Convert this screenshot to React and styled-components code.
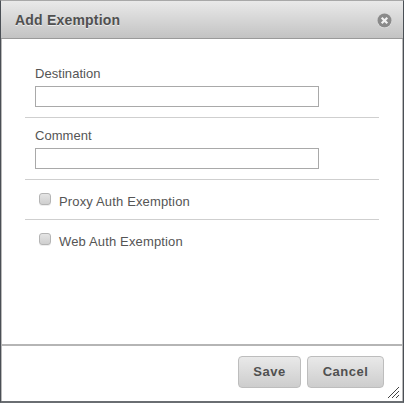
import React from "react";
import styled, { createGlobalStyle } from "styled-components";

const Global = createGlobalStyle`
  html, body { margin: 0; padding: 0; background: #fff; }
  * { box-sizing: border-box; }
`;

const Dialog = styled.div`
  position: relative;
  width: 404px;
  height: 403px;
  display: flex;
  flex-direction: column;
  background: #fff;
  border-left: 1px solid #4a4f55;
  border-right: 1px solid #4a4f55;
  border-bottom: 2px solid #6a6e72;
  border-top: 1px solid #a8a8a8;
  box-shadow: inset 1px 0 0 #b9b9b9, inset -1px 0 0 #b9b9b9;
  font-family: "Liberation Sans", Arial, sans-serif;
`;

const Header = styled.div`
  height: 38px;
  flex: none;
  display: flex;
  align-items: center;
  justify-content: space-between;
  padding: 0 11px 0 14px;
  background: linear-gradient(#e9e9e9, #c3c3c3);
  border-bottom: 1px solid #9a9a9a;
`;

const Title = styled.h1`
  margin: 0;
  font-size: 14px;
  font-weight: bold;
  letter-spacing: 0.2px;
  color: #505050;
  text-shadow: 0 1px 0 #eee;
`;

const Close = styled.svg`
  width: 15px;
  height: 15px;
  margin-top: 1px;
  display: block;
`;

const Body = styled.div`
  flex: 1;
  padding: 24px 24px 0;
`;

const Section = styled.div`
  padding: ${(p) => p.$pad};
  border-bottom: ${(p) => (p.$last ? "none" : "1px solid #cfcfcf")};
`;

const Label = styled.label`
  display: block;
  font-size: 13px;
  line-height: 16px;
  letter-spacing: 0.05px;
  color: #555;
  margin-bottom: 4px;
`;

const Input = styled.input`
  display: block;
  width: 284px;
  height: 21px;
  padding: 0 4px;
  border: 1px solid #a9a9a9;
  background: #fff;
  outline: none;
`;

const CheckRow = styled.label`
  display: flex;
  align-items: center;
  gap: 8px;
  font-size: 13px;
  line-height: 16px;
  letter-spacing: 0.15px;
  color: #555;
`;

const Box = styled.span`
  width: 12px;
  height: 12px;
  flex: none;
  border: 1px solid #b4b4b4;
  border-radius: 3px;
  background: linear-gradient(#e4e4e4, #cfcfcf);
  box-shadow: 0 1px 0 #eee;
  position: relative;
  top: -3px;
`;

const Footer = styled.div`
  height: 57px;
  flex: none;
  display: flex;
  justify-content: flex-end;
  align-items: flex-start;
  gap: 6px;
  padding: 10px 19px 0 0;
  border-top: 2px solid #b5b5b5;
`;

const Button = styled.button`
  width: ${(p) => p.$w}px;
  height: 32px;
  padding: 0 0 2px;
  border: 1px solid #bdbdbd;
  border-radius: 4px;
  background: linear-gradient(#e9e9e9, #cdcdcd);
  font-family: inherit;
  font-size: 13px;
  font-weight: bold;
  letter-spacing: 0.5px;
  color: #505050;
`;

const Grip = styled.svg`
  position: absolute;
  right: 4px;
  bottom: 3px;
  width: 11px;
  height: 11px;
`;

export default function App() {
  return (
    <>
      <Global />
      <Dialog>
        <Header>
          <Title>Add Exemption</Title>
          <Close viewBox="0 0 15 15">
            <circle cx="7.5" cy="8" r="7" fill="#f0f0f0" />
            <circle cx="7.5" cy="7.5" r="7" fill="#8a8a8a" />
            <path d="M4.7 4.7l5.6 5.6M10.3 4.7l-5.6 5.6" stroke="#f2f2f2" strokeWidth="2.2" />
          </Close>
        </Header>
        <Body>
          <Section $pad="3px 0 10px 10px">
            <Label>Destination</Label>
            <Input />
          </Section>
          <Section $pad="10px 0 10px 10px">
            <Label>Comment</Label>
            <Input />
          </Section>
          <Section $pad="14px 0 9px 14px">
            <CheckRow><Box />Proxy Auth Exemption</CheckRow>
          </Section>
          <Section $last $pad="14px 0 0 14px">
            <CheckRow><Box />Web Auth Exemption</CheckRow>
          </Section>
        </Body>
        <Footer>
          <Button $w={63}>Save</Button>
          <Button $w={77}>Cancel</Button>
        </Footer>
        <Grip viewBox="0 0 11 11">
          <path d="M0 11L11 0M4 11l7-7M8 11l3-3" stroke="#444" strokeWidth="1" fill="none" />
        </Grip>
      </Dialog>
    </>
  );
}
